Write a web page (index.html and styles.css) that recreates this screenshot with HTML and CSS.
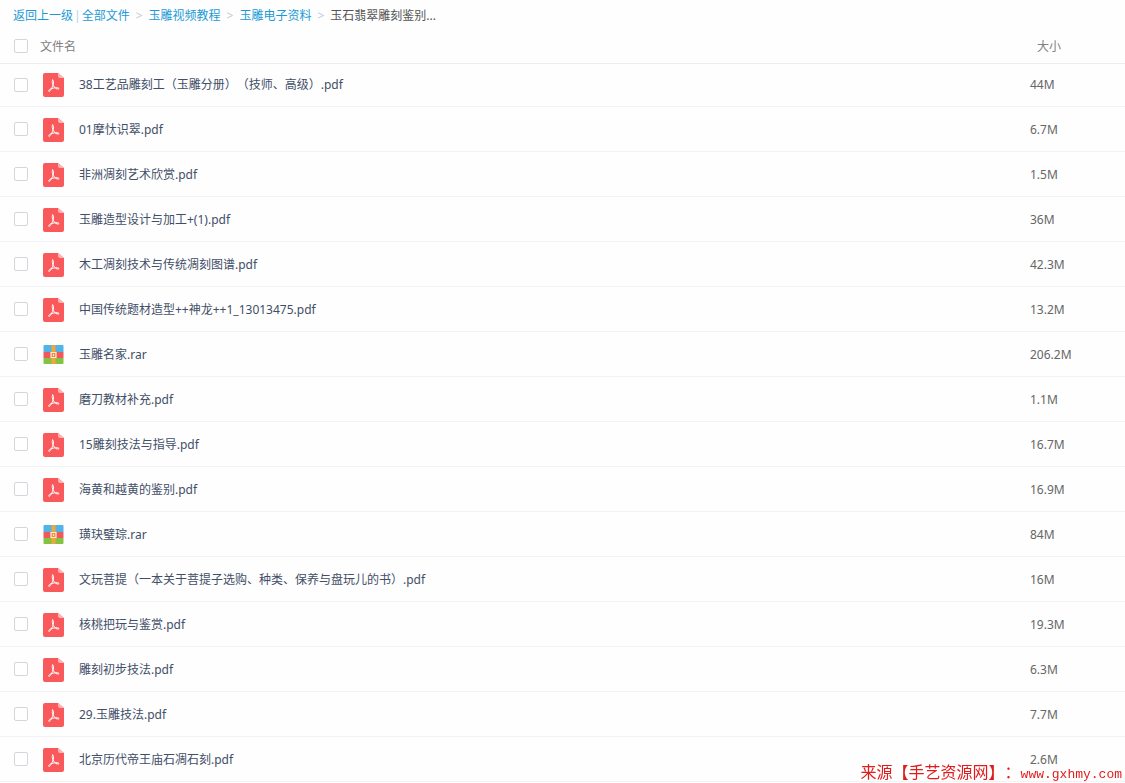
FILE: index.html
```html
<!DOCTYPE html>
<html lang="zh-CN">
<head>
<meta charset="utf-8">
<title>全部文件</title>
<link rel="stylesheet" href="styles.css">
</head>
<body>
<svg class="sprite" aria-hidden="true">
  <symbol id="pdf" viewBox="0 0 21 24">
    <path fill="#f9595b" d="M2 0h13l6 5v17a2 2 0 0 1-2 2H2a2 2 0 0 1-2-2V2a2 2 0 0 1 2-2z"/>
    <path fill="#fdb4b5" d="M15 0l6 5h-4a2 2 0 0 1-2-2z"/>
    <path fill="none" stroke="#fff" stroke-width="1" stroke-linecap="round" stroke-linejoin="round" d="M9.700 7c1.200.2.900 2.600.5 4.400-.7 2.400-2.500 6.600-4 7-1 .1-.6-1.700 1.800-2.700 2.400-.9 6.800-1.400 7.800-.6.700.9-.9 1.500-2.900.3-2-1.300-3.300-3.700-3.600-5.900-.1-1.200-.1-2.500.4-2.500z"/>
  </symbol>
  <symbol id="rar" viewBox="0 0 20 20">
    <path fill="#50b5e6" d="M1 0h18a1 1 0 0 1 1 1v6H0V1a1 1 0 0 1 1-1z"/>
    <path fill="#f0595b" d="M0 7h20v6H0z"/>
    <path fill="#83c341" d="M0 13h20v5a1 1 0 0 1-1 1H1a1 1 0 0 1-1-1z"/>
    <path fill="#f0a63c" d="M8 0h4v19H8z"/>
    <path fill="#ef8c45" stroke="#fff0cf" stroke-width="1.200" d="M7.500 7.500h5v5h-5z"/>
    <path fill="#fff0cf" d="M9.500 9h1v2h-1z"/>
  </symbol>
</svg>
<nav class="crumbs" aria-label="路径">
  <a href="#">返回上一级</a><span class="bar">|</span><a href="#">全部文件</a><span class="sep">&gt;</span><a href="#">玉雕视频教程</a><span class="sep">&gt;</span><a href="#">玉雕电子资料</a><span class="sep">&gt;</span><span class="current">玉石翡翠雕刻鉴别...</span>
</nav>
<table class="files">
  <thead>
    <tr><th class="pick"><input type="checkbox" id="all"></th><th class="name-head" colspan="2"><label for="all">文件名</label></th><th class="size-head">大小</th></tr>
  </thead>
  <tbody>
    <tr><td class="pick"><input type="checkbox" id="f1"></td><td class="kind"><svg class="pdf"><use href="#pdf"/></svg></td><td class="name"><label for="f1">38工艺品雕刻工（玉雕分册）（技师、高级）.pdf</label></td><td class="size">44M</td></tr>
    <tr><td class="pick"><input type="checkbox" id="f2"></td><td class="kind"><svg class="pdf"><use href="#pdf"/></svg></td><td class="name"><label for="f2">01摩忕识翠.pdf</label></td><td class="size">6.7M</td></tr>
    <tr><td class="pick"><input type="checkbox" id="f3"></td><td class="kind"><svg class="pdf"><use href="#pdf"/></svg></td><td class="name"><label for="f3">非洲凋刻艺术欣赏.pdf</label></td><td class="size">1.5M</td></tr>
    <tr><td class="pick"><input type="checkbox" id="f4"></td><td class="kind"><svg class="pdf"><use href="#pdf"/></svg></td><td class="name"><label for="f4">玉雕造型设计与加工+(1).pdf</label></td><td class="size">36M</td></tr>
    <tr><td class="pick"><input type="checkbox" id="f5"></td><td class="kind"><svg class="pdf"><use href="#pdf"/></svg></td><td class="name"><label for="f5">木工凋刻技术与传统凋刻图谱.pdf</label></td><td class="size">42.3M</td></tr>
    <tr><td class="pick"><input type="checkbox" id="f6"></td><td class="kind"><svg class="pdf"><use href="#pdf"/></svg></td><td class="name"><label for="f6">中国传统题材造型++神龙++1_13013475.pdf</label></td><td class="size">13.2M</td></tr>
    <tr><td class="pick"><input type="checkbox" id="f7"></td><td class="kind"><svg class="rar"><use href="#rar"/></svg></td><td class="name"><label for="f7">玉雕名家.rar</label></td><td class="size">206.2M</td></tr>
    <tr><td class="pick"><input type="checkbox" id="f8"></td><td class="kind"><svg class="pdf"><use href="#pdf"/></svg></td><td class="name"><label for="f8">磨刀教材补充.pdf</label></td><td class="size">1.1M</td></tr>
    <tr><td class="pick"><input type="checkbox" id="f9"></td><td class="kind"><svg class="pdf"><use href="#pdf"/></svg></td><td class="name"><label for="f9">15雕刻技法与指导.pdf</label></td><td class="size">16.7M</td></tr>
    <tr><td class="pick"><input type="checkbox" id="f10"></td><td class="kind"><svg class="pdf"><use href="#pdf"/></svg></td><td class="name"><label for="f10">海黄和越黄的鉴别.pdf</label></td><td class="size">16.9M</td></tr>
    <tr><td class="pick"><input type="checkbox" id="f11"></td><td class="kind"><svg class="rar"><use href="#rar"/></svg></td><td class="name"><label for="f11">璜玦璧琮.rar</label></td><td class="size">84M</td></tr>
    <tr><td class="pick"><input type="checkbox" id="f12"></td><td class="kind"><svg class="pdf"><use href="#pdf"/></svg></td><td class="name"><label for="f12">文玩菩提（一本关于菩提子选购、种类、保养与盘玩儿的书）.pdf</label></td><td class="size">16M</td></tr>
    <tr><td class="pick"><input type="checkbox" id="f13"></td><td class="kind"><svg class="pdf"><use href="#pdf"/></svg></td><td class="name"><label for="f13">核桃把玩与鉴赏.pdf</label></td><td class="size">19.3M</td></tr>
    <tr><td class="pick"><input type="checkbox" id="f14"></td><td class="kind"><svg class="pdf"><use href="#pdf"/></svg></td><td class="name"><label for="f14">雕刻初步技法.pdf</label></td><td class="size">6.3M</td></tr>
    <tr><td class="pick"><input type="checkbox" id="f15"></td><td class="kind"><svg class="pdf"><use href="#pdf"/></svg></td><td class="name"><label for="f15">29.玉雕技法.pdf</label></td><td class="size">7.7M</td></tr>
    <tr><td class="pick"><input type="checkbox" id="f16"></td><td class="kind"><svg class="pdf"><use href="#pdf"/></svg></td><td class="name"><label for="f16">北京历代帝王庙石凋石刻.pdf</label></td><td class="size">2.6M</td></tr>
  </tbody>
</table>
<div class="watermark">来源【手艺资源网】：<span class="site">www.gxhmy.com</span></div>
</body>
</html>
```
FILE: styles.css
```css
* {
  box-sizing: border-box;
}

body {
  margin: 0;
  background: #fefefe;
  color: #424e67;
  font: 12px/18px "Noto Sans", "Noto Sans CJK SC", sans-serif;
  text-spacing-trim: space-all;
}

.sprite {
  position: absolute;
  width: 0;
  height: 0;
}

.crumbs {
  display: flex;
  height: 29px;
  padding: 7px 13px 0;
  white-space: nowrap;
}

.crumbs a {
  color: #1c9ad6;
  text-decoration: none;
}

.bar {
  padding: 0 1px;
  color: #b5d3e6;
}

.sep {
  padding: 0 6px;
  color: #c4cad6;
}

.current {
  color: #555;
}

.files {
  display: block;
}

.files tr {
  display: grid;
  grid-template-columns: 40px 39px 1fr 95px;
}

.files th,
.files td {
  display: flex;
  align-items: center;
  height: 45px;
  padding: 2px 0 0;
  border-bottom: 1px solid #f1f3f6;
  font-weight: normal;
}

.files thead,
.files tbody {
  display: block;
}

.files th {
  height: 35px;
  border-bottom-color: #ebedef;
  color: #808080;
}

.files tbody tr:first-child td {
  height: 43px;
  padding-top: 0;
}

.files .pick {
  padding-top: 0;
  padding-left: 14px;
}

.files .name-head {
  grid-column: span 2;
}

.files .size-head {
  padding-left: 7px;
}

.files .kind {
  padding-left: 3px;
}

.files .size {
  color: #666;
}

.files input {
  appearance: none;
  width: 14px;
  height: 14px;
  margin: 0;
  border: 1px solid #d3d6da;
  border-radius: 2px;
  background: #fff;
}

.pdf {
  width: 21px;
  height: 24px;
}

.rar {
  width: 21px;
  height: 20px;
}

.watermark {
  position: fixed;
  right: 3px;
  bottom: 0;
  color: #e01c1c;
  font: 16px/16px "Noto Sans CJK SC", sans-serif;
  white-space: nowrap;
}

.site {
  font: 13px/16px "Liberation Mono", monospace;
}
```
